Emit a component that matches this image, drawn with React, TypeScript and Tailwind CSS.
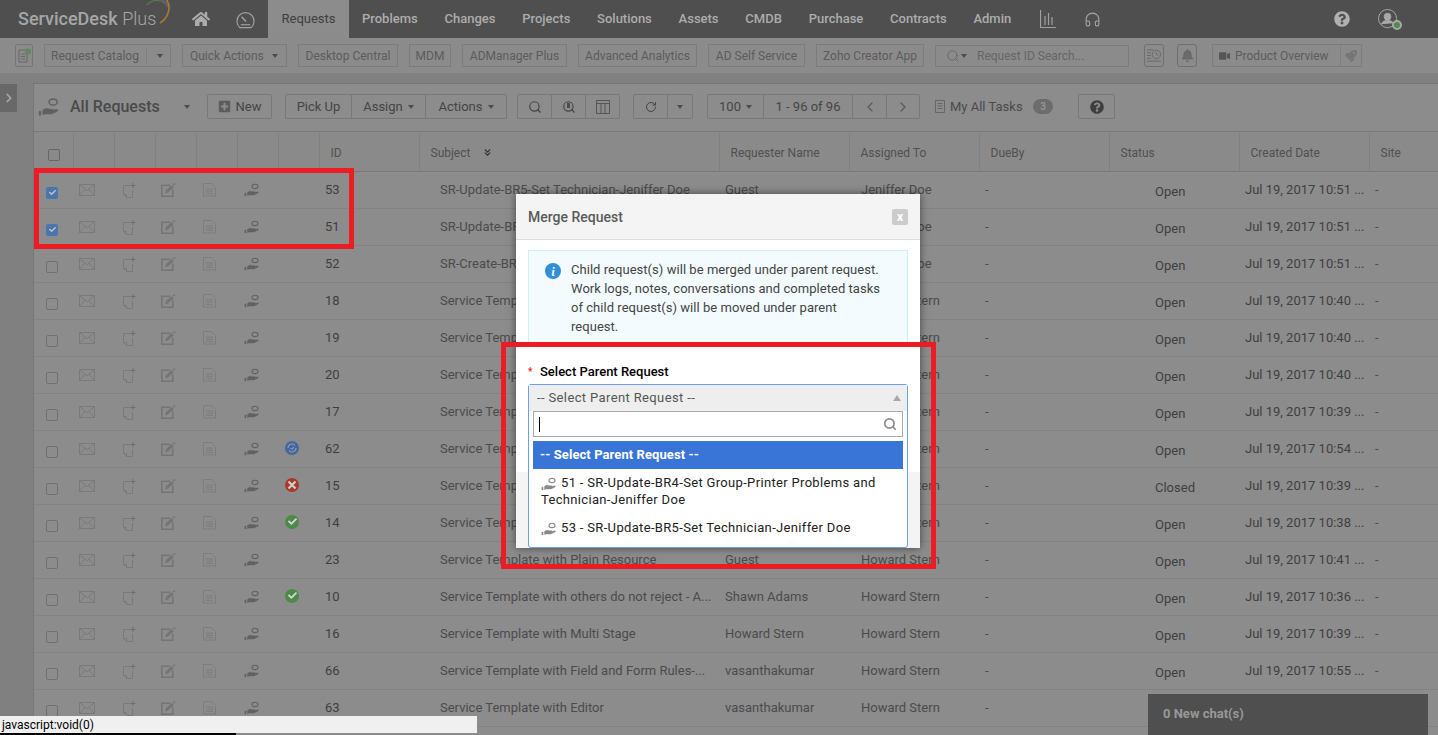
import { FaHome, FaQuestionCircle, FaBell, FaVideo, FaPlusSquare, FaCheck, FaRocket } from "react-icons/fa";
import { Headphones, Search, ChevronLeft, ChevronRight, ChevronRight as Arrow, RotateCw, ChevronsDown } from "lucide-react";

const font = { fontFamily: "Roboto, 'Liberation Sans', sans-serif" };

const nav = ["Problems", "Changes", "Projects", "Solutions", "Assets", "CMDB", "Purchase", "Contracts", "Admin"];

const tools = [
  { label: "Desktop Central", w: "w-[100px]" },
  { label: "MDM", w: "w-[42px]" },
  { label: "ADManager Plus", w: "w-[105px]" },
  { label: "Advanced Analytics", w: "w-[119px]" },
  { label: "AD Self Service", w: "w-[97px]" },
  { label: "Zoho Creator App", w: "w-[108px]" },
];

const rows = [
  { id: "53", subject: "SR-Update-BR5-Set Technician-Jeniffer Doe", by: "Guest", to: "Jeniffer Doe", time: "10:51", checked: true },
  { id: "51", subject: "SR-Update-BR4-Set Group-Printer Problems", by: "Guest", to: "Jeniffer Doe", time: "10:51", checked: true },
  { id: "52", subject: "SR-Create-BR3-Set Technician", by: "Guest", to: "Jeniffer Doe", time: "10:51" },
  { id: "18", subject: "Service Template with Plain Resource", by: "Guest", to: "Howard Stern", time: "10:40" },
  { id: "19", subject: "Service Template with Plain Resource", by: "Guest", to: "Howard Stern", time: "10:40" },
  { id: "20", subject: "Service Template with Plain Resource", by: "Guest", to: "Howard Stern", time: "10:40" },
  { id: "17", subject: "Service Template with Plain Resource", by: "Guest", to: "Howard Stern", time: "10:39" },
  { id: "62", subject: "Service Template with Plain Resource", by: "Guest", to: "Howard Stern", time: "10:54", mark: "swirl" },
  { id: "15", subject: "Service Template with Plain Resource", by: "Guest", to: "Howard Stern", time: "10:39", mark: "rejected", status: "Closed" },
  { id: "14", subject: "Service Template with Plain Resource", by: "Guest", to: "Howard Stern", time: "10:38", mark: "ok" },
  { id: "23", subject: "Service Template with Plain Resource", by: "Guest", to: "Howard Stern", time: "10:41" },
  { id: "10", subject: "Service Template with others do not reject - A...", by: "Shawn Adams", to: "Howard Stern", time: "10:36", mark: "ok" },
  { id: "16", subject: "Service Template with Multi Stage", by: "Howard Stern", to: "Howard Stern", time: "10:39" },
  { id: "66", subject: "Service Template with Field and Form Rules-...", by: "vasanthakumar", to: "Howard Stern", time: "10:55" },
  { id: "63", subject: "Service Template with Editor", by: "vasanthakumar", to: "Howard Stern", time: "10:55" },
];

function HandIcon({ color = "#626262", className = "w-[16px] h-[14px]" }: { color?: string; className?: string }) {
  return (
    <svg viewBox="0 0 16 14" className={className} fill="none" stroke={color}>
      <ellipse cx="11" cy="3.400" rx="3" ry="2.200" strokeWidth="1.100" />
      <path d="M3.500 9.400c1.600-1.500 3.200-1.500 5.200-.7h1.800c.9 0 .9 1.100 0 1.100H8l5.300-.9c1.200-.2 1.600.6.700 1.200l-4 1.900H5.200l-1.700.5z" fill={color} strokeWidth="0.400" />
      <path d="M.8 10h1.300v3H.8z" fill={color} strokeWidth="0.300" />
    </svg>
  );
}

function MailIcon() {
  return (
    <svg viewBox="0 0 16 12" className="w-[16px] h-[12px]" fill="none" stroke="#7a7a7a" strokeWidth="1">
      <rect x="0.500" y="0.500" width="15" height="11" />
      <path d="M.5.500 8 6.800 15.500.500M.5 11.500 6 5.200M15.500 11.500 10 5.200" />
    </svg>
  );
}

function PagePlusIcon() {
  return (
    <svg viewBox="0 0 13 15" className="w-[13px] h-[15px]" fill="none" stroke="#7a7a7a" strokeWidth="1">
      <path d="M7 2.500H.5v9l3 3h6V7" />
      <path d="M.5 11.500h3v3" />
      <path d="M10 0v5M7.500 2.500h5" stroke="#6e6e6e" />
    </svg>
  );
}

function EditIcon() {
  return (
    <svg viewBox="0 0 15 14" className="w-[15px] h-[14px]" fill="none" stroke="#747474">
      <path d="M9 2.200H.8v11h11V6.500" strokeWidth="1.500" />
      <path d="M4.500 9.800 5 7.500 10.500 2.200l2 2L7 9.300z" fill="#747474" strokeWidth="0.500" />
      <path d="M13 0v2.500M11.800 1.200h2.500" strokeWidth="0.800" />
    </svg>
  );
}

function DocIcon() {
  return (
    <svg viewBox="0 0 13 15" className="w-[13px] h-[15px]" fill="none" stroke="#7d7d7d" strokeWidth="1">
      <path d="M.5 13.500V.5h8l4 4v9l-2-1-2 1-2-1-2 1-2-1z" />
      <path d="M3 6h7M3 8.200h7M3 10.400h7" />
    </svg>
  );
}

function Mark({ kind }: { kind?: string }) {
  if (kind === "ok") {
    return (
      <span className="grid w-[14px] h-[14px] place-items-center rounded-full bg-[#4b8a48] text-[#d6d6d6]">
        <FaCheck className="w-[9px] h-[9px]" />
      </span>
    );
  }
  if (kind === "rejected") {
    return (
      <svg viewBox="0 0 14 14" className="w-[14px] h-[14px]">
        <circle cx="7" cy="7" r="7" fill="#a8382a" />
        <path d="M3.500 3.500l7 7M10.500 3.500l-7 7" stroke="#d0d0d0" strokeWidth="2.200" />
      </svg>
    );
  }
  if (kind === "swirl") {
    return (
      <svg viewBox="0 0 14 14" className="w-[14px] h-[14px]" fill="none">
        <circle cx="7" cy="7" r="7" fill="#47669c" />
        <path d="M3 7a4 4 0 0 1 7-2.600M11 7a4 4 0 0 1-7 2.600M5.500 7.500a1.800 1.800 0 0 0 3-1.500" stroke="#8c9cb8" strokeWidth="1.100" />
      </svg>
    );
  }
  return null;
}

function Caret({ className = "" }: { className?: string }) {
  return <span className={`inline-block h-0 w-0 border-x-[3.5px] border-t-[4px] border-x-transparent border-t-[#4c4c4c] ${className}`} />;
}

function Seg({ className = "", children }: { className?: string; children: React.ReactNode }) {
  return (
    <div className={`flex h-full items-center justify-center gap-[5px] border-r border-[#787878] last:border-r-0 ${className}`}>
      {children}
    </div>
  );
}

function Group({ className = "", children }: { className?: string; children: React.ReactNode }) {
  return (
    <div className={`flex h-[25px] items-center rounded-[2px] border border-[#787878] text-[13px] text-[#454545] ${className}`}>
      {children}
    </div>
  );
}

function Topbar() {
  return (
    <header className="flex h-[38px] items-center bg-[#4f4f4f] text-[13px] font-medium text-[#acacac]">
      <div className="relative w-[192px] shrink-0 pl-[18px] text-[18px] leading-none text-[#a6a6a6]">
        ServiceDesk <span className="font-light">Plus</span>
        <svg viewBox="0 0 28 28" className="absolute left-[145px] top-[-12px] w-[28px] h-[28px]" fill="none" strokeWidth="1.200">
          <path d="M2 7C7 1 16 1 20 6" stroke="#4b7f56" />
          <path d="M7 2c6-2 13 1 15 7" stroke="#8c4a4a" />
          <path d="M14 1c6 1 10 6 10 12" stroke="#4c6c96" />
          <path d="M21 1c5 6 4 18-6 24" stroke="#a57b32" strokeWidth="1.600" />
        </svg>
      </div>
      <FaHome className="h-[16px] w-[18px] text-[#acacac]" />
      <svg viewBox="0 0 20 20" className="ml-[26px] w-[19px] h-[19px]" fill="none" stroke="#a0a0a0" strokeWidth="1.200">
        <path d="M4 18.500a9 9 0 1 1 12 0z" />
        <path d="M6 7l4.500 5" strokeWidth="1.600" />
        <path d="M5 15.500h10" />
      </svg>
      <div className="ml-[13px] flex h-full w-[81px] items-center justify-center bg-[#8c8c8c] font-normal text-[#3e3e3e]">Requests</div>
      <nav className="ml-[13px] flex gap-[26.750px]">
        {nav.map((n) => (
          <span key={n}>{n}</span>
        ))}
      </nav>
      <svg viewBox="0 0 16 18" className="ml-[29px] w-[16px] h-[18px]" fill="none" stroke="#a0a0a0">
        <path d="M.5 0v17.500H16M5 6v9M8.500 3v12M12 7v8" strokeWidth="1.200" />
      </svg>
      <Headphones className="ml-[28px] h-[19px] w-[17px] text-[#a8a8a8]" strokeWidth={1.500} />
      <div className="ml-auto flex items-center gap-[27px] pr-[38px]">
        <FaQuestionCircle className="h-[16px] w-[16px] text-[#b0b0b0]" />
        <div className="relative">
          <svg viewBox="0 0 22 22" className="w-[23px] h-[21px]" fill="none" stroke="#a8a8a8" strokeWidth="1">
            <circle cx="10" cy="10" r="9.500" />
            <circle cx="10" cy="8" r="3.500" fill="#a8a8a8" />
            <path d="M3.500 16c1-3 3-4 6.500-4s5 1 6 3" fill="#a8a8a8" />
          </svg>
          <span className="absolute bottom-0 right-[-2px] h-[10px] w-[10px] rounded-full border-2 border-[#a8a8a8] bg-[#4f8a4f]" />
        </div>
      </div>
    </header>
  );
}

function Toolbar() {
  return (
    <div className="flex h-[35px] items-center gap-[11px] bg-[#8b8b8b] pl-[15px] text-[12px] text-[#5c5c5c]">
      <div className="grid h-[23px] w-[18px] place-items-center rounded-[2px] border border-[#767676]">
        <svg viewBox="0 0 13 16" className="w-[13px] h-[16px]" fill="none" stroke="#666">
          <path d="M1 2h8v12H1zM3 6h4M3 8.500h4M3 11h4" />
          <circle cx="10" cy="3.500" r="3" fill="#5d8a5d" stroke="none" />
        </svg>
      </div>
      <div className="flex h-[23px] w-[127px] items-center border border-[#7c7c7c]">
        <span className="w-[102px] border-r border-[#7f7f7f] pl-[6px]">Request Catalog</span>
        <Caret className="ml-[10px]" />
      </div>
      <div className="flex h-[23px] w-[105px] items-center gap-[8px] border border-[#7c7c7c] pl-[7px]">
        Quick Actions <Caret />
      </div>
      {tools.map((t) => (
        <div key={t.label} className={`grid h-[23px] place-items-center border border-[#7c7c7c] ${t.w}`}>
          {t.label}
        </div>
      ))}
      <div className="flex h-[22px] w-[194px] items-center border border-[#7c7c7c] pl-[10px] text-[#666666]">
        <Search className="h-[14px] w-[14px]" strokeWidth={1.500} />
        <Caret className="ml-[1px] mr-[10px]" />
        Request ID Search...
      </div>
      <div className="ml-[4px] grid h-[23px] w-[20px] place-items-center rounded-[3px] border border-[#6f6f6f]">
        <svg viewBox="0 0 16 16" className="w-[15px] h-[15px]" fill="none" stroke="#666">
          <circle cx="10" cy="7" r="4.500" />
          <path d="M10 4.500V7l2 1M0 2h7M0 5h4M0 8h4M0 11h4M0 14h15" />
        </svg>
      </div>
      <div className="ml-[2px] grid h-[23px] w-[20px] place-items-center rounded-[3px] border border-[#6f6f6f]">
        <FaBell className="h-[13px] w-[13px] text-[#6a6a6a]" />
      </div>
      <div className="ml-[4px] flex h-[23px] w-[150px] items-center border border-[#7c7c7c] pl-[6px]">
        <FaVideo className="h-[10px] w-[11px] text-[#555555]" />
        <span className="ml-[5px] w-[105px]">Product Overview</span>
        <span className="grid h-full flex-1 place-items-center border-l border-[#7f7f7f]">
          <FaRocket className="h-[12px] w-[12px] text-[#767676]" />
        </span>
      </div>
    </div>
  );
}

function Filters() {
  return (
    <div className="flex h-[47px] items-center pb-[2px]">
      <div className="ml-[4px] w-[22px]">
        <HandIcon className="w-[22px] h-[20px]" color="#606060" />
      </div>
      <span className="ml-[10px] w-[114px] text-[16px] font-medium text-[#4a4a4a]">All Requests</span>
      <Caret />
      <Group className="ml-[17px] w-[65px] justify-center gap-[5px]">
        <FaPlusSquare className="h-[13px] w-[13px] text-[#5c5c5c]" /> New
      </Group>
      <Group className="ml-[13px] w-[222px]">
        <Seg className="w-[66px]">Pick Up</Seg>
        <Seg className="w-[74px]">Assign <Caret /></Seg>
        <Seg className="flex-1">Actions <Caret /></Seg>
      </Group>
      <Group className="ml-[10px] w-[103px]">
        <Seg className="flex-1"><Search className="h-[14px] w-[14px]" strokeWidth={2} /></Seg>
        <Seg className="flex-1">
          <span className="relative">
            <Search className="h-[14px] w-[14px]" strokeWidth={2} />
            <span className="absolute left-[5px] top-[3px] h-[5px] w-[3px] bg-[#4c4c4c]" />
          </span>
        </Seg>
        <Seg className="flex-1">
          <svg viewBox="0 0 14 14" className="w-[14px] h-[14px]" fill="none" stroke="#555">
            <path d="M.5.5h13v13H.5zM.5 3.500h13M5 3.500v10M9 3.500v10" />
          </svg>
        </Seg>
      </Group>
      <Group className="ml-[13px] w-[60px]">
        <Seg className="w-[34px]"><RotateCw className="h-[12px] w-[12px]" /></Seg>
        <Seg className="flex-1"><Caret /></Seg>
      </Group>
      <Group className="ml-[14px] w-[213px]">
        <Seg className="w-[56px]">100 <Caret /></Seg>
        <Seg className="w-[89px]">1 - 96 of 96</Seg>
        <Seg className="w-[34px]"><ChevronLeft className="h-[16px] w-[16px] text-[#5c5c5c]" /></Seg>
        <Seg className="flex-1"><ChevronRight className="h-[16px] w-[16px] text-[#5c5c5c]" /></Seg>
      </Group>
      <svg viewBox="0 0 10 13" className="ml-[15px] w-[10px] h-[13px]" fill="none" stroke="#666">
        <path d="M.5.500h9v12h-9zM2.500 3.500h5M2.500 6h5M2.500 8.500h5" />
      </svg>
      <span className="ml-[5px] w-[74px] text-[13px] text-[#4a4a4a]">My All Tasks</span>
      <span className="ml-[9px] grid h-[15px] w-[20px] place-items-center rounded-full bg-[#6c6c6c] text-[10px] font-medium text-[#9a9a9a]">3</span>
      <Group className="ml-[25px] w-[37px] justify-center">
        <FaQuestionCircle className="h-[14px] w-[14px] text-[#3e3e3e]" />
      </Group>
    </div>
  );
}

function RequestTable() {
  const th = "border-l border-[#808080] pt-[2px] text-left text-[12px] font-normal text-[#505050]";
  return (
    <table className="w-full table-fixed border-collapse text-[13px]">
      <colgroup>
        <col className="w-[39px]" />
        {[0, 1, 2, 3, 4, 5].map((i) => (
          <col key={i} className="w-[41px]" />
        ))}
        <col className="w-[100px]" />
        <col className="w-[300px]" />
        <col className="w-[130px]" />
        <col className="w-[130px]" />
        <col className="w-[130px]" />
        <col className="w-[130px]" />
        <col className="w-[130px]" />
        <col />
      </colgroup>
      <thead>
        <tr className="h-[40px] border-y border-[#7a7a7a] bg-[#8a8a8a]">
          <th className="pl-[14px] pt-[7px]">
            <span className="block h-[12px] w-[12px] rounded-[2px] border border-[#666666]" />
          </th>
          {[0, 1, 2, 3, 4, 5].map((i) => (
            <th key={i} className={th} />
          ))}
          <th className={`${th} pl-[11px]`}>ID</th>
          <th className={`${th} pl-[11px]`}>
            <span className="flex items-center gap-[12px]">
              Subject <ChevronsDown className="h-[11px] w-[11px] text-[#333333]" strokeWidth={2.500} />
            </span>
          </th>
          <th className={`${th} pl-[11px]`}>Requester Name</th>
          <th className={`${th} pl-[11px]`}>Assigned To</th>
          <th className={`${th} pl-[11px]`}>DueBy</th>
          <th className={`${th} pl-[11px]`}>Status</th>
          <th className={`${th} pl-[11px]`}>Created Date</th>
          <th className={`${th} pl-[11px]`}>Site</th>
        </tr>
      </thead>
      <tbody>
        {rows.map((r) => (
          <tr key={r.id} className="h-[37px] border-b border-[#838383] text-[#4b4b4b]">
            <td className="pl-[12px] pt-[5px]">
              {r.checked ? (
                <span className="grid h-[12px] w-[12px] place-items-center rounded-[2px] bg-[#4a76ad]">
                  <FaCheck className="h-[7px] w-[7px] text-[#c4c4c4]" />
                </span>
              ) : (
                <span className="block h-[12px] w-[12px] rounded-[2px] border border-[#707070]" />
              )}
            </td>
            <td className="pl-[6px]"><MailIcon /></td>
            <td className="pl-[9px]"><PagePlusIcon /></td>
            <td className="pl-[6px]"><EditIcon /></td>
            <td className="pl-[7px]"><DocIcon /></td>
            <td className="pl-[7px]"><HandIcon /></td>
            <td className="pl-[7px] pb-[3px]"><Mark kind={r.mark} /></td>
            <td className="pl-[6px] text-[#3f3f3f]">{r.id}</td>
            <td className="truncate pl-[21px]">{r.subject}</td>
            <td className="pl-[6px]">{r.by}</td>
            <td className="pl-[12px]">{r.to}</td>
            <td className="pl-[6px]">-</td>
            <td className="pl-[46px] pt-[4px] text-[#3f3f3f]">{r.status ?? "Open"}</td>
            <td className="whitespace-nowrap pl-[6px] text-[#3f3f3f]">Jul 19, 2017 {r.time} ...</td>
            <td className="pl-[6px]">-</td>
          </tr>
        ))}
      </tbody>
    </table>
  );
}

function MergeModal() {
  return (
    <div className="absolute left-[516px] top-[194px] flex h-[354px] w-[404px] flex-col bg-white shadow-[0_0_8px_rgba(0,0,0,0.5)]">
      <div className="flex h-[46px] shrink-0 items-center justify-between border-b border-[#dddddd] bg-[#f4f4f4] pl-[12px] pr-[12px] pt-[1px]">
        <span className="text-[14px] font-medium text-[#5a5a5a]">Merge Request</span>
        <span className="grid h-[16px] w-[16px] place-items-center rounded-[2px] bg-[#cccccc] text-[12px] font-bold leading-none text-white">x</span>
      </div>
      <div className="mx-[12px] mt-[10px] flex h-[96px] shrink-0 gap-[10px] border border-[#cdeefb] bg-[#f3fbff] pl-[16px] pt-[9px] text-[13px] leading-[19px] tracking-[0.040px] text-[#444444]">
        <span className="mt-[3px] grid h-[16px] w-[16px] shrink-0 place-items-center rounded-full bg-[#2f8fd8] font-serif text-[12px] font-bold italic text-white">i</span>
        <p className="w-[316px]">
          Child request(s) will be merged under parent request. Work logs, notes, conversations and completed tasks of child request(s) will be moved under parent request.
        </p>
      </div>
      <label className="mt-[16px] flex h-[19px] shrink-0 items-center pl-[12px] text-[13px] font-medium text-black">
        <span className="w-[12px] text-[10px] text-[#ee1c25]">*</span>Select Parent Request
      </label>
      <div className="flex-1 bg-white" />
      <div className="h-[76px] shrink-0 bg-[#f4f4f4]" />
      <div className="absolute left-[12px] top-[190px] h-[164px] w-[380px] rounded-[3px] border border-[#6d9eeb] bg-white text-[13px]">
        <div className="flex h-[26px] items-center justify-between bg-[#eeeeee] pl-[8px] pr-[6px] tracking-[0.370px] text-[#555555]">
          -- Select Parent Request --
          <span className="h-0 w-0 border-x-[4px] border-b-[6px] border-x-transparent border-b-[#a8a8a8]" />
        </div>
        <div className="mx-[4px] flex h-[26px] items-center justify-between border border-[#aaaaaa] pl-[5px] pr-[5px]">
          <span className="h-[15px] w-px bg-black" />
          <Search className="h-[14px] w-[14px] text-[#8c8c8c]" strokeWidth={3} />
        </div>
        <div className="mx-[4px] mt-[4px] flex h-[28px] items-center bg-[#3875d7] pl-[7px] font-bold tracking-[0.080px] text-white">-- Select Parent Request --</div>
        <div className="mx-[4px] mt-[5px] pl-[8px] pr-[6px] leading-[17px] tracking-[0.330px] text-[#222222]">
          <HandIcon color="#888888" className="mr-[4px] inline-block w-[16px] h-[14px]" />
          51 - SR-Update-BR4-Set Group-Printer Problems and Technician-Jeniffer Doe
        </div>
        <div className="mx-[4px] mt-[11px] pl-[8px] leading-[17px] tracking-[0.330px] text-[#222222]">
          <HandIcon color="#888888" className="mr-[4px] inline-block w-[16px] h-[14px]" />
          53 - SR-Update-BR5-Set Technician-Jeniffer Doe
        </div>
      </div>
    </div>
  );
}

export default function App() {
  return (
    <div className="relative h-screen w-full overflow-hidden bg-[#8c8c8c]" style={font}>
      <Topbar />
      <Toolbar />
      <div className="flex h-[662px]">
        <aside className="w-[33px] shrink-0 bg-[#808080] pt-[11px]">
          <div className="grid h-[28px] w-[17px] place-items-center bg-[#686868]">
            <Arrow className="h-[14px] w-[14px] text-[#a8a8a8]" strokeWidth={3} />
          </div>
        </aside>
        <main className="min-w-0 flex-1">
          <div className="h-[10px] bg-[#808080]" />
          <div className="border-l border-t border-[#777777]">
            <Filters />
            <RequestTable />
          </div>
        </main>
      </div>

      <MergeModal />

      {/* annotation boxes from the screenshot */}
      <div className="absolute left-[34px] top-[168px] h-[81px] w-[320px] border-[5px] border-[#ed1c24]" />
      <div className="absolute left-[501px] top-[342px] h-[227px] w-[435px] border-[5px] border-[#ed1c24]" />

      <div className="absolute bottom-0 right-[10px] flex h-[41px] w-[280px] items-center bg-[#4f4f4f] pb-[2px] pl-[15px] text-[13px] font-bold text-[#989898]">
        0 New chat(s)
      </div>
      <div className="absolute bottom-[2px] left-0 flex h-[17px] w-[477px] items-center bg-[#f0f0f0] pl-[2px] pt-[1px] text-[12px] leading-none text-black">
        javascript:void(0)
      </div>
      <div className="absolute bottom-0 left-0 h-[2px] w-[236px] bg-black" />
    </div>
  );
}
